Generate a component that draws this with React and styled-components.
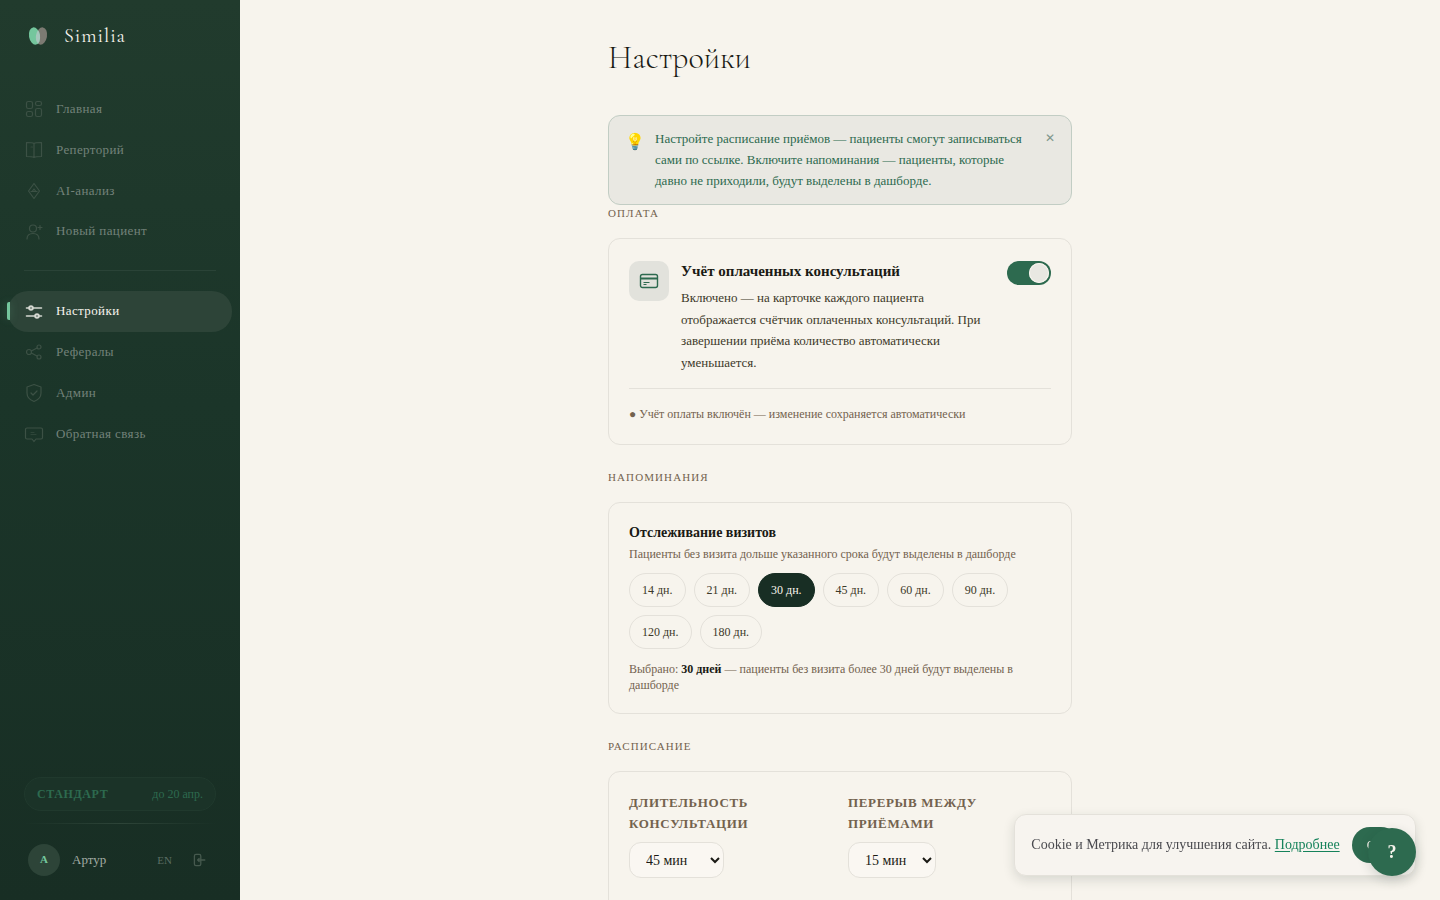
import { useState } from 'react';
import styled, { createGlobalStyle, css } from 'styled-components';

const GlobalStyle = createGlobalStyle`
  * {
    box-sizing: border-box;
  }
  body {
    margin: 0;
    background: #f7f4ed;
    color: #1a1a14;
    font-family: 'Liberation Serif', 'Times New Roman', serif;
    font-size: 14px;
    line-height: 1.6;
  }
  button,
  select {
    font-family: inherit;
  }
`;

const display = css`
  font-family: 'Cormorant Garamond', Cormorant, 'Liberation Serif', serif;
`;

const Layout = styled.div`
  display: grid;
  grid-template-columns: 240px 1fr;
`;

const Sidebar = styled.aside`
  position: sticky;
  top: 0;
  height: 100vh;
  display: flex;
  flex-direction: column;
  background: linear-gradient(180deg, #213b2d 0%, #1b3529 45%, #182e24 100%);
`;

const Brand = styled.a`
  display: flex;
  align-items: center;
  gap: 12px;
  height: 72px;
  padding: 0 24px;
  color: #f7f4ed;
  text-decoration: none;
`;

const BrandName = styled.span`
  ${display}
  font-size: 20px;
  font-weight: 400;
  letter-spacing: 0.05em;
`;

const Nav = styled.nav`
  display: flex;
  flex-direction: column;
  padding: 17px 8px 0;
`;

const NavItem = styled.a`
  position: relative;
  display: flex;
  align-items: center;
  gap: 12px;
  padding: 10px 16px;
  border-radius: 20px;
  color: ${({ $active }) => ($active ? '#f7f4ed' : '#73827a')};
  background: ${({ $active }) => ($active ? '#2d4438' : 'transparent')};
  font-size: 13px;
  line-height: 1.6;
  letter-spacing: 0.03em;
  text-decoration: none;

  svg {
    color: ${({ $active }) => ($active ? '#d5d8d1' : '#3c5145')};
  }
`;

const ActiveMark = styled.span`
  position: absolute;
  left: -1px;
  top: 11px;
  width: 3px;
  height: 18px;
  border-radius: 2px 0 0 2px;
  background: #74c69d;
  box-shadow: 0 0 8px rgba(116, 198, 157, 0.3);
`;

const NavDivider = styled.hr`
  width: calc(100% - 32px);
  height: 1px;
  margin: 18px 16px 20px;
  border: 0;
  background: #2a4337;
`;

const SidebarFooter = styled.div`
  margin-top: auto;
  padding: 0 24px 24px;
`;

const Plan = styled.a`
  display: flex;
  justify-content: space-between;
  align-items: center;
  height: 34px;
  padding: 0 12px;
  border: 1px solid #20392d;
  border-radius: 17px;
  background: #1b3328;
  color: #2d6a4f;
  font-size: 12px;
  line-height: 20px;
  text-decoration: none;
`;

const PlanName = styled.strong`
  letter-spacing: 0.05em;
`;

const FooterLine = styled.div`
  height: 1px;
  margin: 12px 0 20px;
  background: linear-gradient(90deg, transparent, #2d4438, transparent);
`;

const User = styled.div`
  display: flex;
  align-items: center;
  padding: 0 4px;
`;

const Avatar = styled.span`
  display: grid;
  place-items: center;
  width: 32px;
  height: 32px;
  border-radius: 50%;
  background: #2d4438;
  color: #74c69d;
  font-size: 11px;
  font-weight: 700;
`;

const UserName = styled.span`
  flex: 1;
  margin-left: 12px;
  color: #a3aca4;
  font-size: 13px;
`;

const FooterButton = styled.button`
  display: flex;
  padding: 4px;
  border: 0;
  margin-left: 12px;
  background: none;
  color: ${({ $dim }) => ($dim ? '#46594e' : '#5b6d63')};
  font-size: 11px;
  cursor: pointer;
`;

const Main = styled.main`
  width: 100%;
  max-width: 512px;
  margin: 0 auto;
  padding: 32px 24px 0;
`;

const Title = styled.h1`
  ${display}
  margin: 0 0 32px;
  font-size: 32px;
  font-weight: 300;
  line-height: 51px;
`;

const Hint = styled.div`
  display: flex;
  align-items: flex-start;
  gap: 12px;
  padding: 13px 16px;
  border: 1px solid #c2cdc4;
  border-radius: 12px;
  background: #e9e8e2;
  color: #2d6a4f;
`;

const HintIcon = styled.span`
  width: 18px;
  font-size: 16px;
  line-height: 26px;
`;

const HintText = styled.p`
  flex: 1;
  margin: 0;
  font-size: 13px;
  line-height: 1.6;
`;

const CloseButton = styled.button`
  padding: 0;
  border: 0;
  background: none;
  color: #7f978b;
  font-size: 12px;
  line-height: 18px;
  cursor: pointer;
`;

const SectionLabel = styled.h2`
  margin: 0 0 16px;
  color: #73624e;
  font-size: 11px;
  font-weight: 400;
  line-height: 17px;
  letter-spacing: 0.1em;
  text-transform: uppercase;
`;

const Card = styled.section`
  margin-bottom: 24px;
  padding: 20px;
  border: 1px solid #e4e1da;
  border-radius: 12px;
`;

const PaymentRow = styled.div`
  display: flex;
  align-items: flex-start;
  gap: 12px;
  padding-top: 2px;
`;

const IconTile = styled.span`
  display: grid;
  place-items: center;
  flex: none;
  width: 40px;
  height: 40px;
  border-radius: 10px;
  background: #e2e2dc;
  color: #2d6a4f;
`;

const PaymentText = styled.div`
  flex: 1;
`;

const CardTitle = styled.h3`
  margin: 0 0 2px;
  font-size: ${({ $large }) => ($large ? '15px' : '14px')};
  font-weight: 700;
  line-height: 20px;
`;

const PaymentDescription = styled.p`
  margin: 6px 0 0;
  color: #3d3929;
  font-size: 13px;
  line-height: 1.65;
`;

const Toggle = styled.input`
  appearance: none;
  flex: none;
  width: 44px;
  height: 24px;
  margin: 0 0 0 12px;
  padding: 2px;
  border-radius: 12px;
  background: #9aa69e;
  cursor: pointer;

  &::before {
    content: '';
    display: block;
    width: 20px;
    height: 20px;
    border-radius: 50%;
    background: #e9e8e2;
    box-shadow: 0 0 0 1px #f7f4ed inset;
  }
  &:checked {
    background: #2d6a4f;
  }
  &:checked::before {
    margin-left: 20px;
  }
`;

const CardNote = styled.p`
  margin: 15px 0 0;
  padding-top: 16px;
  border-top: 1px solid #e4e1da;
  color: #73624e;
  font-size: 12px;
  line-height: 19px;
`;

const Muted = styled.p`
  margin: 0;
  color: #73624e;
  font-size: 12px;
  line-height: 16px;

  strong {
    color: #1a1a14;
  }
`;

const Subtitle = styled(Muted)`
  line-height: 18px;
`;

const Chips = styled.div`
  display: flex;
  flex-wrap: wrap;
  gap: 8px;
  margin: 10px 0 12px;
`;

const Chip = styled.button`
  padding: 6px 12px;
  border: 1px solid ${({ $active }) => ($active ? '#182e24' : '#e4e1da')};
  border-radius: 17px;
  background: ${({ $active }) => ($active ? '#182e24' : 'transparent')};
  color: ${({ $active }) => ($active ? '#f7f4ed' : '#3d3929')};
  font-size: 12px;
  line-height: 20px;
  cursor: pointer;
`;

const FieldGrid = styled.div`
  display: grid;
  grid-template-columns: 1fr 1fr;
  gap: 16px;
  min-height: 120px;
`;

const Field = styled.div`
  display: flex;
  flex-direction: column;
  align-items: flex-start;
  gap: 8px;
`;

const FieldLabel = styled.label`
  color: #73624e;
  font-size: 13px;
  font-weight: 700;
  line-height: 21px;
  letter-spacing: 0.05em;
  text-transform: uppercase;
`;

const Select = styled.select`
  height: 36px;
  padding: 0 12px;
  border: 1px solid #e4e1da;
  border-radius: 12px;
  background: #faf7f2;
  color: #1a1a14;
  font-size: 14px;
`;

const CookieBar = styled.div`
  position: fixed;
  right: 24px;
  bottom: 24px;
  display: flex;
  align-items: center;
  gap: 12px;
  padding: 12px 16px;
  border: 1px solid #e4e1da;
  border-radius: 12px;
  background: #f7f4ef;
  box-shadow: 0 4px 12px rgba(26, 46, 36, 0.14);
  color: #4a4a4f;
  font-size: 14px;
`;

const CookieLink = styled.a`
  color: #15825a;
  text-underline-offset: 2px;
`;

const AcceptButton = styled.button`
  height: 36px;
  padding: 0 15px;
  border: 0;
  border-radius: 18px;
  background: #2d6a4f;
  color: #f7f4ed;
  font-size: 12px;
  cursor: pointer;
`;

const HelpButton = styled.button`
  position: fixed;
  right: 24px;
  bottom: 24px;
  width: 48px;
  height: 48px;
  padding: 0;
  border: 0;
  border-radius: 50%;
  background: #2d6a4f;
  box-shadow: 0 4px 12px rgba(26, 46, 36, 0.16);
  color: #f7f4ed;
  font-size: 18px;
  font-weight: 700;
  cursor: pointer;
`;

const Icon = ({ size = 20, children }) => (
  <svg
    width={size}
    height={size}
    viewBox='0 0 20 20'
    fill='none'
    stroke='currentColor'
    strokeWidth='1.2'
    strokeLinecap='round'
    strokeLinejoin='round'
    aria-hidden='true'
  >
    {children}
  </svg>
);

const icons = {
  home: (
    <Icon>
      <rect x='2.5' y='2.5' width='6' height='7' rx='1.8' />
      <rect x='11.5' y='2.5' width='6' height='4' rx='1.8' />
      <rect x='2.5' y='12.5' width='6' height='5' rx='1.8' />
      <rect x='11.5' y='9.5' width='6' height='8' rx='1.8' />
    </Icon>
  ),
  book: (
    <Icon>
      <path d='M10 3.5C8.5 2.5 5 2.5 2.5 2.5v14c2.5 0 5.5 0 7.5 1 2-1 5-1 7.5-1v-14c-2.5 0-6 0-7.5 1v14' />
      <path d='M7 7h1.5' opacity='0.7' />
    </Icon>
  ),
  ai: (
    <Icon>
      <path d='M10 2.5l5.5 7.5-5.5 7.5L4.5 10z' />
      <path d='M7 10.5h6M8.5 10L10 8l1.5 2' />
    </Icon>
  ),
  patient: (
    <Icon>
      <circle cx='9' cy='6.5' r='3.5' />
      <path d='M3 17c0-3.500 2.500-5.500 6-5.500s6 2 6 5.500M16 3.500v4M14 5.500h4' />
    </Icon>
  ),
  settings: (
    <Icon>
      <path d='M2.5 6H5m4 0h8.5M2.5 14H11m4 0h2.5' strokeWidth='1.6' />
      <circle cx='7' cy='6' r='1.8' strokeWidth='2' />
      <circle cx='13' cy='14' r='1.8' strokeWidth='2' />
    </Icon>
  ),
  share: (
    <Icon>
      <circle cx='5' cy='10' r='2.5' />
      <circle cx='15' cy='5' r='2' />
      <circle cx='15' cy='15' r='2' />
      <path d='M7.3 9l5.7-3M7.3 11l5.700 3' />
    </Icon>
  ),
  shield: (
    <Icon>
      <path d='M10 1.5l7 2.5v6c0 4-3 7-7 8.5C6 17 3 14 3 10V4z' />
      <path d='M7 10l2 2 4-4' />
    </Icon>
  ),
  feedback: (
    <Icon>
      <path d='M3 4h14a1.5 1.5 0 011.5 1.5v8A1.5 1.5 0 0117 15h-5l-2 2.5L8 15H3a1.5 1.5 0 01-1.5-1.5v-8A1.5 1.5 0 013 4z' />
      <path d='M7 8.5h3M7 10.5h5' opacity='0.6' />
    </Icon>
  ),
};

const mainLinks = [
  { icon: 'home', label: 'Главная' },
  { icon: 'book', label: 'Реперторий' },
  { icon: 'ai', label: 'AI-анализ' },
  { icon: 'patient', label: 'Новый пациент' },
];

const serviceLinks = [
  { icon: 'settings', label: 'Настройки', active: true },
  { icon: 'share', label: 'Рефералы' },
  { icon: 'shield', label: 'Админ' },
  { icon: 'feedback', label: 'Обратная связь' },
];

const periods = [14, 21, 30, 45, 60, 90, 120, 180];
const durations = [30, 45, 60, 90, 120];
const pauses = [10, 15, 30];

const NavLinks = ({ links }) =>
  links.map(({ icon, label, active }) => (
    <NavItem key={icon} href={`#${icon}`} $active={active}>
      {active ? <ActiveMark /> : null}
      {icons[icon]}
      {label}
    </NavItem>
  ));

const Logo = () => (
  <svg width='28' height='28' viewBox='0 0 28 28' aria-hidden='true'>
    <defs>
      <clipPath id='leaf'>
        <ellipse cx='10.5' cy='14' rx='5.5' ry='8.7' transform='rotate(-10 10.5 14)' />
      </clipPath>
    </defs>
    <ellipse cx='17.5' cy='14' rx='5.5' ry='8.7' transform='rotate(10 17.5 14)' fill='#7c7a72' />
    <ellipse cx='10.5' cy='14' rx='5.5' ry='8.7' transform='rotate(-10 10.5 14)' fill='#74c69d' />
    <g clipPath='url(#leaf)'>
      <ellipse cx='17.5' cy='14' rx='5.5' ry='8.7' transform='rotate(10 17.5 14)' fill='#a6c6bc' />
    </g>
  </svg>
);

const App = () => {
  const [paid, setPaid] = useState(true);
  const [period, setPeriod] = useState(30);

  return (
    <>
      <GlobalStyle />
      <Layout>
        <Sidebar>
          <Brand href='#home'>
            <Logo />
            <BrandName>Similia</BrandName>
          </Brand>
          <Nav>
            <NavLinks links={mainLinks} />
            <NavDivider />
            <NavLinks links={serviceLinks} />
          </Nav>
          <SidebarFooter>
            <Plan href='#plan'>
              <PlanName>СТАНДАРТ</PlanName>
              <span>до 20 апр.</span>
            </Plan>
            <FooterLine />
            <User>
              <Avatar>А</Avatar>
              <UserName>Артур</UserName>
              <FooterButton type='button'>EN</FooterButton>
              <FooterButton type='button' aria-label='Выйти' $dim>
                <Icon size={16}>
                  <rect x='3' y='3' width='8' height='14' rx='2' strokeWidth='1.6' />
                  <path d='M16 10H7m2-2l-2 2 2 2' strokeWidth='1.6' />
                </Icon>
              </FooterButton>
            </User>
          </SidebarFooter>
        </Sidebar>

        <Main>
          <Title>Настройки</Title>
          <Hint>
            <HintIcon>💡</HintIcon>
            <HintText>
              Настройте расписание приёмов — пациенты смогут записываться сами
              по ссылке. Включите напоминания — пациенты, которые давно не
              приходили, будут выделены в дашборде.
            </HintText>
            <CloseButton type='button' aria-label='Закрыть'>
              ✕
            </CloseButton>
          </Hint>

          <SectionLabel>Оплата</SectionLabel>
          <Card>
            <PaymentRow>
              <IconTile>
                <Icon>
                  <rect x='1.5' y='3.5' width='17' height='13' rx='2' strokeWidth='1.4' />
                  <path d='M2 7.5h16' strokeWidth='1.8' />
                  <path d='M4.5 11.5h6M4.5 13.5h3' strokeLinecap='butt' />
                </Icon>
              </IconTile>
              <PaymentText>
                <CardTitle $large>Учёт оплаченных консультаций</CardTitle>
                <PaymentDescription>
                  Включено — на карточке каждого пациента отображается счётчик
                  оплаченных консультаций. При завершении приёма количество
                  автоматически уменьшается.
                </PaymentDescription>
              </PaymentText>
              <Toggle
                type='checkbox'
                role='switch'
                aria-label='Учёт оплаченных консультаций'
                checked={paid}
                onChange={() => setPaid((prevState) => !prevState)}
              />
            </PaymentRow>
            <CardNote>
              ● Учёт оплаты включён — изменение сохраняется автоматически
            </CardNote>
          </Card>

          <SectionLabel>Напоминания</SectionLabel>
          <Card>
            <CardTitle>Отслеживание визитов</CardTitle>
            <Subtitle>
              Пациенты без визита дольше указанного срока будут выделены в
              дашборде
            </Subtitle>
            <Chips>
              {periods.map((days) => (
                <Chip
                  key={days}
                  type='button'
                  $active={days === period}
                  onClick={() => setPeriod(days)}
                >
                  {`${days} дн.`}
                </Chip>
              ))}
            </Chips>
            <Muted>
              Выбрано: <strong>{`${period} дней`}</strong>
              {` — пациенты без визита более ${period} дней будут выделены в дашборде`}
            </Muted>
          </Card>

          <SectionLabel>Расписание</SectionLabel>
          <Card>
            <FieldGrid>
              <Field>
                <FieldLabel htmlFor='duration'>
                  Длительность консультации
                </FieldLabel>
                <Select id='duration' defaultValue={45}>
                  {durations.map((value) => (
                    <option key={value} value={value}>{`${value} мин`}</option>
                  ))}
                </Select>
              </Field>
              <Field>
                <FieldLabel htmlFor='pause'>Перерыв между приёмами</FieldLabel>
                <Select id='pause' defaultValue={15}>
                  {pauses.map((value) => (
                    <option key={value} value={value}>{`${value} мин`}</option>
                  ))}
                </Select>
              </Field>
            </FieldGrid>
          </Card>
        </Main>
      </Layout>

      <CookieBar>
        <span>
          Cookie и Метрика для улучшения сайта.{' '}
          <CookieLink href='#cookies'>Подробнее</CookieLink>
        </span>
        <AcceptButton type='button'>OK</AcceptButton>
      </CookieBar>
      <HelpButton type='button' aria-label='Помощь'>
        ?
      </HelpButton>
    </>
  );
};

export default App;
